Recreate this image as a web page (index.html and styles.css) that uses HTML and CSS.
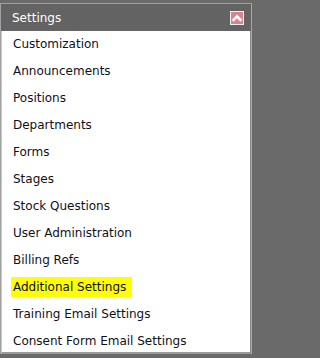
FILE: index.html
```html
<!DOCTYPE html>
<html>
<head>
<meta charset="utf-8">
<link rel="stylesheet" href="styles.css">
</head>
<body>
<div class="panel">
  <div class="header">
    <span class="title">Settings</span>
    <span class="toggle">
      <svg width="12" height="12" viewBox="0 0 12 12"><path d="M2.6 7.8 L6 4.4 L9.4 7.8" fill="none" stroke="#fff" stroke-width="2.6" stroke-linecap="square"/></svg>
    </span>
  </div>
  <div class="list">
    <div class="item">Customization</div>
    <div class="item">Announcements</div>
    <div class="item">Positions</div>
    <div class="item">Departments</div>
    <div class="item">Forms</div>
    <div class="item">Stages</div>
    <div class="item">Stock Questions</div>
    <div class="item">User Administration</div>
    <div class="item">Billing Refs</div>
    <div class="item"><span class="hl">Additional Settings</span></div>
    <div class="item">Training Email Settings</div>
    <div class="item">Consent Form Email Settings</div>
  </div>
</div>
</body>
</html>
```
FILE: styles.css
```css
html, body {
  margin: 0;
  padding: 0;
  background: #6a6a6a;
}
body {
  width: 252px;
  height: 358px;
  overflow: hidden;
  font-family: "DejaVu Sans", Verdana, sans-serif;
  font-size: 12px;
}
.panel {
  margin-top: 3px;
  width: 250px;
  border-top: 1px solid #a2a2a2;
  border-left: 1px solid #a2a2a2;
  border-right: 1px solid #a8a8a8;
}
.header {
  height: 27px;
  background: #636363;
  display: flex;
  align-items: center;
  justify-content: space-between;
  padding: 0 7px 0 11px;
}
.title {
  color: #fff;
  font-size: 12px;
}
.toggle {
  width: 12px;
  height: 12px;
  border: 1px solid #f2f2f2;
  background: #d8848f;
  display: flex;
  margin-top: 1px;
}
.list {
  background: #fff;
  height: 321px;
  overflow: hidden;
  border-left: 1px solid #c8c8c8;
  border-right: 1px solid #8a8a8a;
  border-bottom: 2px solid #9a9a9a;
}
.item {
  height: 27px;
  line-height: 27px;
  padding-left: 11px;
  color: #10101a;
  white-space: nowrap;
}
.hl {
  background: #ffff00;
  padding: 3px 6px 3px 2px;
  margin-left: -2px;
}
```
